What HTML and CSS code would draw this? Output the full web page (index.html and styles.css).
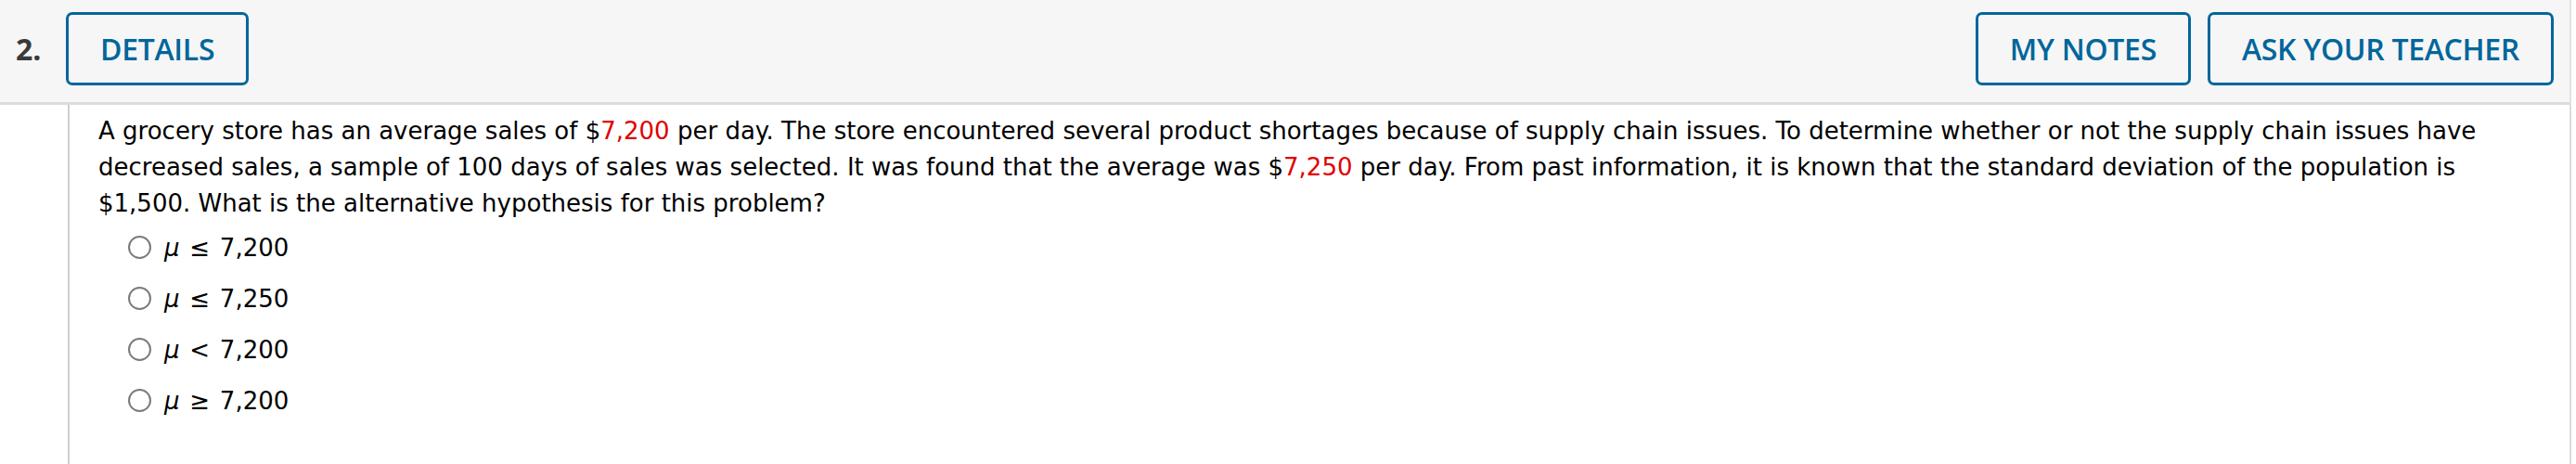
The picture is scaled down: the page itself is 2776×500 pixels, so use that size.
FILE: index.html
```html
<!DOCTYPE html>
<html lang="en">
<head>
<meta charset="utf-8">
<title>Question 2</title>
<link rel="stylesheet" href="styles.css">
</head>
<body>
<div class="question">
  <div class="q-header">
    <span class="q-num">2.</span>
    <button class="q-btn">DETAILS</button>
    <div class="q-actions">
      <button class="q-btn">MY NOTES</button>
      <button class="q-btn">ASK YOUR TEACHER</button>
    </div>
  </div>
  <div class="q-body">
    <p class="q-text">A grocery store has an average sales of $<span class="red">7,200</span> per day. The store encountered several product shortages because of supply chain issues. To determine whether or not the supply chain issues have decreased sales, a sample of 100 days of sales was selected. It was found that the average was $<span class="red">7,250</span> per day. From past information, it is known that the standard deviation of the population is $1,500. What is the alternative hypothesis for this problem?</p>
    <ul class="choices">
      <li class="choice"><input type="radio" name="q2" class="radio"><span class="ans"><i class="mu">μ</i> ≤ 7,200</span></li>
      <li class="choice"><input type="radio" name="q2" class="radio"><span class="ans"><i class="mu">μ</i> ≤ 7,250</span></li>
      <li class="choice"><input type="radio" name="q2" class="radio"><span class="ans"><i class="mu">μ</i> &lt; 7,200</span></li>
      <li class="choice"><input type="radio" name="q2" class="radio"><span class="ans"><i class="mu">μ</i> ≥ 7,200</span></li>
    </ul>
  </div>
</div>
</body>
</html>
```
FILE: styles.css
```css
html, body {
  margin: 0;
  padding: 0;
  background: #ffffff;
}

.question {
  width: 2771px;
  min-height: 500px;
  display: flex;
  flex-direction: column;
}

.q-header {
  display: flex;
  align-items: flex-start;
  background: #f6f6f6;
  border-bottom: 3px solid #dcdcdc;
  border-right: 2px solid #e2e2e2;
  padding: 13px 17px 18px 17px;
  height: 79px;
}

.q-num {
  font-family: "Open Sans", "Liberation Sans", sans-serif;
  font-weight: 700;
  font-size: 32px;
  color: #3a3a3a;
  line-height: 79px;
  width: 54px;
}

.q-btn {
  font-family: "Open Sans", "Liberation Sans", sans-serif;
  font-weight: 600;
  font-size: 32px;
  color: #00669b;
  background: transparent;
  border: 3px solid #00669b;
  border-radius: 7px;
  height: 79px;
  padding: 0 34px;
  line-height: 73px;
  margin: 0;
  letter-spacing: -0.3px;
}

.q-actions {
  margin-left: auto;
  display: flex;
  gap: 18px;
}

.q-body {
  flex: 1;
  margin-left: 73px;
  border-left: 2px solid #cfcfcf;
  border-right: 2px solid #dcdcdc;
  padding: 9px 40px 20px 31px;
}

.q-text {
  margin: 0;
  font-family: "DejaVu Sans", Verdana, sans-serif;
  font-size: 26px;
  line-height: 39px;
  color: #000;
}

.red {
  color: #e00000;
}

.choices {
  list-style: none;
  margin: 0;
  padding: 0 0 0 32px;
}

.choice {
  display: flex;
  align-items: center;
  height: 55px;
  font-family: "DejaVu Sans", Verdana, sans-serif;
  font-size: 26px;
  word-spacing: 2.5px;
  color: #000;
}

.radio {
  appearance: none;
  -webkit-appearance: none;
  width: 25px;
  height: 25px;
  margin: 0 14px 0 0;
  border: 2px solid #7a7a7a;
  border-radius: 50%;
  background: #fff;
  box-sizing: border-box;
}

.mu {
  font-style: italic;
}
```
